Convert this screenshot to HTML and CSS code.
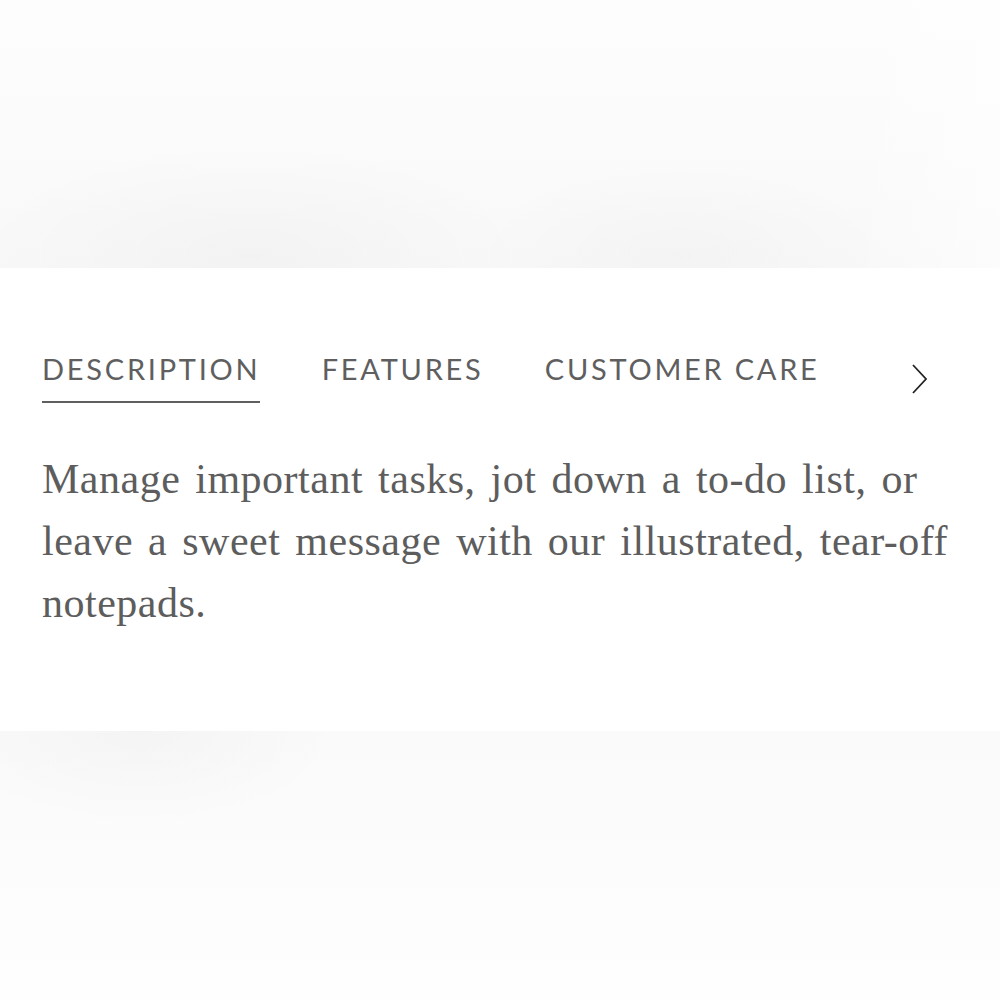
FILE: index.html
```html
<!DOCTYPE html>
<html lang="en">
<head>
<meta charset="utf-8">
<title>Product details</title>
<link rel="stylesheet" href="styles.css">
</head>
<body>
<div class="band band-top"></div>
<section class="details">
  <nav class="tabs">
    <div class="tab-list">
      <span class="tab active">DESCRIPTION</span>
      <span class="tab">FEATURES</span>
      <span class="tab">CUSTOMER CARE</span>
    </div>
    <span class="next">
      <svg width="20" height="32" viewBox="0 0 20 32" aria-hidden="true">
        <path d="M3 3 L16 17 L3 31" fill="none" stroke="#222" stroke-width="1.8"/>
      </svg>
    </span>
  </nav>
  <p class="desc">Manage important tasks, jot down a to-do list, or leave a sweet message with our illustrated, tear-off notepads.</p>
</section>
<div class="band band-bottom"></div>
</body>
</html>
```
FILE: styles.css
```css
html, body {
  margin: 0;
  padding: 0;
  background: #ffffff;
}
body {
  width: 1000px;
  height: 1000px;
  overflow: hidden;
  display: flex;
  flex-direction: column;
}
.band-top {
  height: 268px;
  flex: none;
  background:
    radial-gradient(ellipse 40% 60% at 25% 95%, rgba(0,0,0,0.025), rgba(0,0,0,0) 70%),
    radial-gradient(ellipse 30% 50% at 68% 95%, rgba(0,0,0,0.02), rgba(0,0,0,0) 70%),
    linear-gradient(to right, rgba(255,255,255,0) 85%, rgba(255,255,255,0.6) 100%),
    linear-gradient(to bottom, #fdfdfd 0%, #fbfbfb 50%, #f8f8f8 100%);
}
.details {
  flex: 1;
  padding: 0 42px;
  display: flex;
  flex-direction: column;
}
.tabs {
  display: flex;
  align-items: flex-start;
  justify-content: space-between;
  padding-top: 86px;
}
.tab-list {
  display: flex;
  gap: 64px;
}
.tab {
  font-family: Lato, "Liberation Sans", sans-serif;
  font-size: 29px;
  line-height: 1;
  letter-spacing: 2.75px;
  color: #5f5f5f;
  padding-bottom: 18px;
  border-bottom: 2px solid transparent;
  margin-right: -2.75px;
}
.tab.active {
  border-bottom-color: #5f5f5f;
}
.next {
  display: block;
  margin-top: 8px;
  margin-right: 28px;
  width: 20px;
  height: 32px;
}
.next svg {
  display: block;
}
.desc {
  margin: 45px 0 0;
  font-family: "Liberation Serif", "Times New Roman", serif;
  font-size: 42px;
  line-height: 62px;
  letter-spacing: 0.5px;
  word-spacing: 4px;
  color: #5d5d5d;
}
.band-bottom {
  height: 269px;
  flex: none;
  background:
    radial-gradient(ellipse 25% 45% at 14% 0%, rgba(0,0,0,0.025), rgba(0,0,0,0) 80%),
    linear-gradient(to bottom, #fafafa 0%, #fcfcfc 50%, #fefefe 100%);
}
```
